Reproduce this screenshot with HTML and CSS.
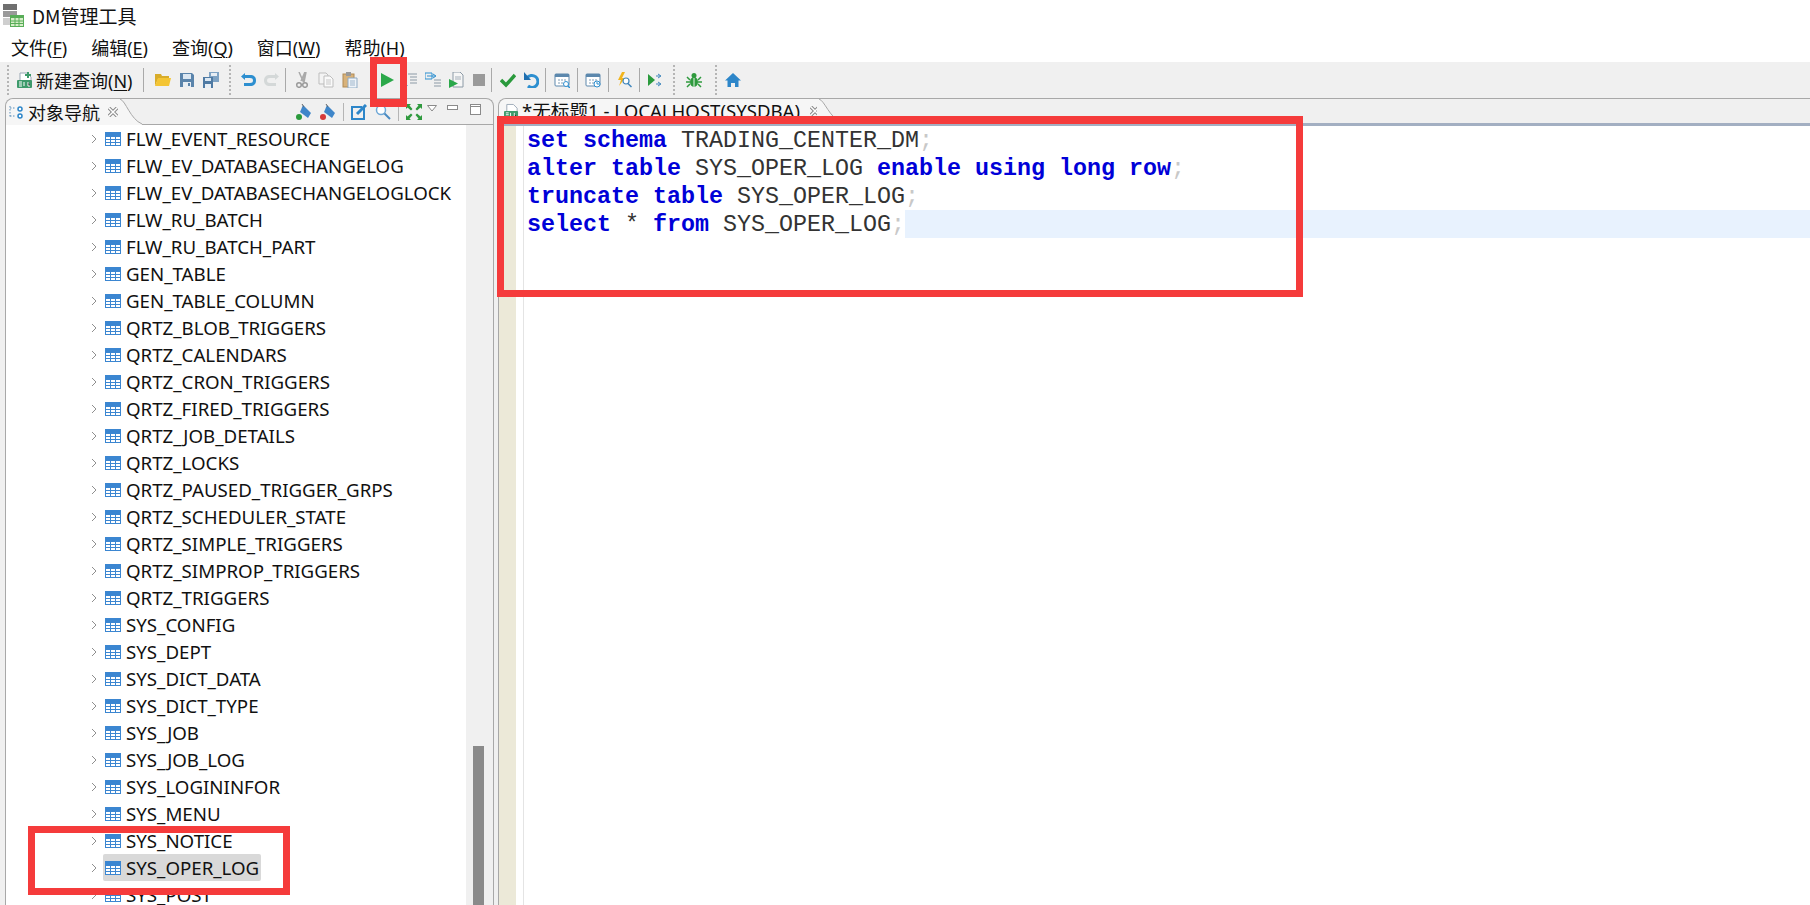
FILE: index.html
```html
<!DOCTYPE html>
<html lang="zh">
<head>
<meta charset="utf-8">
<title>DM管理工具</title>
<link rel="stylesheet" href="styles.css">
</head>
<body>
<svg class="defs" width="0" height="0" aria-hidden="true">
  <symbol id="tbl" viewBox="0 0 16 14">
    <rect width="16" height="14" fill="#3b86d1"/>
    <path d="M1 5h14v8H1z" fill="#fff"/>
    <path d="M1 7.500h14M1 10.500h14M5.500 5v8M10.500 5v8" stroke="#3b86d1" stroke-width="1"/>
  </symbol>
  <symbol id="x" viewBox="0 0 10 10">
    <path d="M1 1l8 8M9 1l-8 8" stroke="#8a8a8a" stroke-width="3.500"/>
    <path d="M1 1l8 8M9 1l-8 8" stroke="#fff" stroke-width="1.500"/>
  </symbol>
  <symbol id="sql" viewBox="0 0 16 16">
    <path d="M3 1h7l4 4v6H3z" fill="#fff" stroke="#9aa8b5"/>
    <rect y="8" width="15" height="8" rx="1" fill="#3d9a6b"/>
    <path d="M2 10h3M2 12h3M2 14h3M7 10v4M11 10v4h2" stroke="#fff" stroke-width="1"/>
  </symbol>
</svg>

<header class="titlebar">
  <svg class="app-icon" width="21" height="24" viewBox="0 0 21 24"><rect x="0" y="0" width="14" height="6" fill="#6f6f6f"/><rect x="0" y="7" width="14" height="6" fill="#9a9a9a"/><rect x="0" y="14" width="14" height="7" fill="#cfcfcf"/><rect x="7" y="11" width="14" height="12" fill="#58ad58"/><path d="M8 14h12v8H8z" fill="#d6edc8"/><path d="M8 17h12M8 19.500h12M12 14v8M16 14v8" stroke="#58ad58"/></svg>
  <span class="app-name">DM管理工具</span>
</header>

<nav class="menubar">
  <span class="menu-item">文件(<u>F</u>)</span>
  <span class="menu-item">编辑(<u>E</u>)</span>
  <span class="menu-item">查询(<u>Q</u>)</span>
  <span class="menu-item">窗口(<u>W</u>)</span>
  <span class="menu-item">帮助(<u>H</u>)</span>
</nav>

<div class="toolbar">
  <i class="grip"></i>
  <span class="newq">
    <svg width="16" height="16" viewBox="0 0 16 16"><use href="#sql"/><path d="M11 0v6M8 3h6" stroke="#3d9a6b" stroke-width="2"/></svg>
    <span>新建查询(<u>N</u>)</span>
  </span>
  <i class="sep s1"></i>
  <svg class="ico" viewBox="0 0 16 16"><path d="M0 2h6l1 2h7v3H3l-3 7z" fill="#d8ac2a"/><path d="M3 6h13l-2 8H0z" fill="#f4c534"/></svg>
  <svg class="ico" viewBox="0 0 16 16"><path d="M1 1h12l2 2v12H1z" fill="#5a84ab"/><rect x="4" y="2" width="8" height="5" fill="#dbe7f2"/><rect x="4" y="10" width="8" height="5" fill="#e8eef4"/><rect x="9" y="11" width="2" height="3" fill="#5a84ab"/></svg>
  <svg class="ico" viewBox="0 0 16 16"><path d="M6 0h10v10H6z" fill="#7fa3c4"/><rect x="8" y="1" width="6" height="3" fill="#e8eef4"/><path d="M0 5h10v11H0z" fill="#4f7aa3"/><rect x="2" y="6" width="6" height="3" fill="#dbe7f2"/><rect x="2" y="12" width="6" height="4" fill="#e8eef4"/></svg>
  <i class="grip g2"></i>
  <span class="group">
    <svg class="ico" viewBox="0 0 16 16"><path d="M5 1L1 4.500 5 8V6h5c2 0 3 .8 3 2.500S12 11 10 11H4v3h6c4 0 6-2 6-5.500S14 3 10 3H5z" fill="#2d8fd0"/></svg>
    <svg class="ico" viewBox="0 0 16 16"><path d="M11 1l4 3.500L11 8V6H6C4 6 3 6.800 3 8.500S4 11 6 11h6v3H6c-4 0-6-2-6-5.500S2 3 6 3h5z" fill="#d4d8d8"/></svg>
  </span>
  <i class="sep s3"></i>
  <span class="group">
    <svg class="ico" viewBox="0 0 16 16"><path d="M5 0l4 9 3-9-2 10M11 0L7 9" stroke="#a9a9a9" stroke-width="1.500" fill="none"/><circle cx="5" cy="13" r="2.300" fill="none" stroke="#9a9a9a" stroke-width="1.500"/><circle cx="11" cy="13" r="2.300" fill="none" stroke="#9a9a9a" stroke-width="1.500"/></svg>
    <svg class="ico" viewBox="0 0 16 16"><path d="M1 1h7l2 2v9H1z" fill="#f4f4f4" stroke="#bdbdbd"/><path d="M6 4h6l3 3v8H6z" fill="#fafafa" stroke="#bdbdbd"/><path d="M8 8h5M8 10h5M8 12h5" stroke="#c8c8c8"/></svg>
    <svg class="ico" viewBox="0 0 16 16"><rect x="1" y="2" width="11" height="13" fill="#d8b27a" stroke="#b08a55"/><rect x="4" y="0" width="5" height="4" fill="#9a9a9a"/><path d="M6 6h9v10H6z" fill="#eef3f8" stroke="#8faac4"/><path d="M8 9h5M8 11h5M8 13h5" stroke="#9fb6cc"/></svg>
  </span>
  <i class="sep s4"></i>
  <span class="group g23">
    <svg class="ico" viewBox="0 0 16 16"><path d="M2 1l13 7-13 7z" fill="#2ba84a"/></svg>
    <svg class="ico" viewBox="0 0 16 16"><path d="M6 2h9M8 5h7M8 8h7M8 11h7" stroke="#8c9aa6"/><path d="M3 1v5M3 10v5" stroke="#2d8fd0" stroke-width="1.500"/><path d="M0 13l3 3 3-3" fill="#2d8fd0"/></svg>
    <svg class="ico" viewBox="0 0 16 16"><path d="M9 8h7M9 11h7M9 14h7" stroke="#8c9aa6"/><path d="M0 1h7v6H0z" fill="none" stroke="#2d8fd0"/><path d="M2 4h8M8 2l3 2-3 2" stroke="#2d8fd0" fill="none"/></svg>
    <svg class="ico" viewBox="0 0 16 16"><path d="M5 0h7l3 3v12H5z" fill="#f6f6f6" stroke="#8c9aa6"/><path d="M7 5h6M7 7h6" stroke="#a5b0ba"/><path d="M1 7l9 4.500L1 16z" fill="#2ba84a"/></svg>
    <svg class="ico" viewBox="0 0 16 16"><rect x="2" y="2" width="12" height="12" fill="#9a9a9a"/></svg>
  </span>
  <i class="sep s5"></i>
  <span class="group g23">
    <svg class="ico" viewBox="0 0 16 16"><path d="M1 8l5 5 9-10" stroke="#2a9a3c" stroke-width="3.500" fill="none"/></svg>
    <svg class="ico" viewBox="0 0 16 16"><path d="M4 6a6 6 0 1 1 1 8" stroke="#2d8fd0" stroke-width="3" fill="none"/><path d="M1 0v8h7z" fill="#1f6fb0"/></svg>
  </span>
  <i class="sep s6"></i>
  <svg class="ico" viewBox="0 0 16 16"><rect x="1" y="2" width="14" height="12" rx="1" fill="#fff" stroke="#5c88ad"/><path d="M1 2h14v3H1z" fill="#5c88ad"/><path d="M4 8h2M7 8h2M10 8h2M4 11h2M7 11h2" stroke="#7f9cb5"/><circle cx="12" cy="12" r="2.500" fill="#fff" stroke="#2d8fd0"/><path d="M14 14l2 2" stroke="#2d8fd0" stroke-width="1.500"/></svg>
  <i class="sep s7"></i>
  <svg class="ico" viewBox="0 0 16 16"><rect x="1" y="2" width="14" height="12" rx="1" fill="#fff" stroke="#5c88ad"/><path d="M1 2h14v3H1z" fill="#5c88ad"/><path d="M4 8h2M7 8h2M10 8h2M4 11h2M7 11h2" stroke="#7f9cb5"/><circle cx="12" cy="12" r="3" fill="#fff" stroke="#2d8fd0"/><path d="M12 10v2h2" stroke="#2d8fd0" fill="none"/></svg>
  <i class="sep s7"></i>
  <svg class="ico" viewBox="0 0 16 16"><path d="M6 0l-4 8h3l-2 6 6-8H6l3-6z" fill="#f2b51d"/><circle cx="10" cy="9" r="3" fill="#fff" stroke="#3f86bd" stroke-width="1.200"/><path d="M12 11.500l3.500 3.500" stroke="#3f86bd" stroke-width="1.500"/></svg>
  <i class="sep s7"></i>
  <svg class="ico" viewBox="0 0 16 16"><path d="M1 2l7 6-7 6z" fill="#2a9a3c"/><path d="M9 4h4M11 2l3 2-3 2M9 12h4M11 10l3 2-3 2" stroke="#3f86bd" fill="none"/></svg>
  <i class="grip g3"></i>
  <svg class="ico" viewBox="0 0 16 16"><ellipse cx="8" cy="10" rx="4" ry="5" fill="#2f9a3e"/><circle cx="8" cy="3.500" r="2.500" fill="#2f9a3e"/><path d="M1 5l3 3M15 5l-3 3M0 10h4M16 10h-4M1 15l3-3M15 15l-3-3" stroke="#2f9a3e" stroke-width="1.500"/><path d="M8 6v9" stroke="#e6f3e6"/></svg>
  <i class="grip g4"></i>
  <svg class="ico" viewBox="0 0 16 16"><path d="M8 1L0 8.500h2.500V15H6v-4h4v4h3.500V8.500H16z" fill="#2d86c9"/></svg>
</div>

<main class="workspace">
  <section class="pane nav-pane">
    <div class="pane-head">
      <div class="tab tab-nav">
        <svg width="14" height="15" viewBox="0 0 14 15"><path d="M1 1v11M1 3h6M1 11h6" stroke="#5a8fbb" stroke-dasharray="1.500 1.500" fill="none"/><circle cx="11" cy="4" r="2" fill="#fff" stroke="#2d86c9" stroke-width="1.500"/><circle cx="11" cy="11" r="2" fill="#fff" stroke="#2d86c9" stroke-width="1.500"/></svg>
        <span class="tab-text">对象导航</span>
        <svg class="tab-x" viewBox="0 0 10 10"><use href="#x"/></svg>
      </div>
      <svg class="tab-curve" width="24" height="26" viewBox="0 0 24 26"><path d="M0 0h2c6 2 10 20 22 25v1H0z" fill="#f6f6f6"/><path d="M2 0c6 2 10 20 22 25" fill="none" stroke="#a8a8a8"/></svg>
      <div class="head-tools">
        <svg class="ico" viewBox="0 0 16 16"><path d="M7 1l8 8-3 5-8-6z" fill="#3f86c9"/><circle cx="3" cy="13" r="3" fill="#2a9a3c"/><path d="M6 0l2 3" stroke="#666"/></svg>
        <svg class="ico" viewBox="0 0 16 16"><path d="M7 1l8 8-3 5-8-6z" fill="#3f86c9"/><circle cx="3" cy="13" r="3" fill="#d63a3a"/><path d="M6 0l2 3" stroke="#666"/></svg>
        <i class="vline"></i>
        <svg class="ico" viewBox="0 0 16 16"><path d="M13 4v11H1V3h10" fill="none" stroke="#2d86c9" stroke-width="2"/><path d="M6 10l9-9" stroke="#2d86c9" stroke-width="3"/></svg>
        <svg class="ico" viewBox="0 0 16 16"><circle cx="6" cy="6" r="4.500" fill="#fff" stroke="#6fa8d6" stroke-width="1.500"/><path d="M9.500 9.500L15 15" stroke="#4a8bc2" stroke-width="2"/></svg>
        <i class="vline"></i>
        <svg class="ico" viewBox="0 0 16 16"><path d="M0 0h5l-1.500 1.500L6.500 5 5 6.500 1.500 3.500 0 5zM16 0v5l-1.500-1.500L11 6.500 9.500 5l3-3.500L11 0zM0 16v-5l1.500 1.500L5 9.500 6.500 11l-3 3.500L5 16zM16 16h-5l1.500-1.500L9.500 11 11 9.500l3.500 3L16 11z" fill="#2f9a3e"/></svg>
        <svg class="mini tri" width="10" height="7" viewBox="0 0 10 7"><path d="M.5.500h9L5 6z" fill="#fff" stroke="#8a8a8a"/></svg>
        <svg class="mini minb" width="11" height="5" viewBox="0 0 11 5"><rect x=".5" y=".5" width="10" height="4" fill="#fff" stroke="#8a8a8a"/></svg>
        <svg class="mini maxb" width="11" height="11" viewBox="0 0 11 11"><rect x=".5" y=".5" width="10" height="10" fill="#fff" stroke="#8a8a8a"/><path d="M0 2.500h11" stroke="#8a8a8a"/></svg>
      </div>
    </div>
    <div class="tree-wrap">
      <ul class="tree">
        <li class="row"><svg class="arrow" viewBox="0 0 6 10"><path d="M1 1l4 4-4 4"/></svg><span class="node"><svg class="tbl"><use href="#tbl"/></svg>FLW_EVENT_RESOURCE</span></li>
        <li class="row"><svg class="arrow" viewBox="0 0 6 10"><path d="M1 1l4 4-4 4"/></svg><span class="node"><svg class="tbl"><use href="#tbl"/></svg>FLW_EV_DATABASECHANGELOG</span></li>
        <li class="row"><svg class="arrow" viewBox="0 0 6 10"><path d="M1 1l4 4-4 4"/></svg><span class="node"><svg class="tbl"><use href="#tbl"/></svg>FLW_EV_DATABASECHANGELOGLOCK</span></li>
        <li class="row"><svg class="arrow" viewBox="0 0 6 10"><path d="M1 1l4 4-4 4"/></svg><span class="node"><svg class="tbl"><use href="#tbl"/></svg>FLW_RU_BATCH</span></li>
        <li class="row"><svg class="arrow" viewBox="0 0 6 10"><path d="M1 1l4 4-4 4"/></svg><span class="node"><svg class="tbl"><use href="#tbl"/></svg>FLW_RU_BATCH_PART</span></li>
        <li class="row"><svg class="arrow" viewBox="0 0 6 10"><path d="M1 1l4 4-4 4"/></svg><span class="node"><svg class="tbl"><use href="#tbl"/></svg>GEN_TABLE</span></li>
        <li class="row"><svg class="arrow" viewBox="0 0 6 10"><path d="M1 1l4 4-4 4"/></svg><span class="node"><svg class="tbl"><use href="#tbl"/></svg>GEN_TABLE_COLUMN</span></li>
        <li class="row"><svg class="arrow" viewBox="0 0 6 10"><path d="M1 1l4 4-4 4"/></svg><span class="node"><svg class="tbl"><use href="#tbl"/></svg>QRTZ_BLOB_TRIGGERS</span></li>
        <li class="row"><svg class="arrow" viewBox="0 0 6 10"><path d="M1 1l4 4-4 4"/></svg><span class="node"><svg class="tbl"><use href="#tbl"/></svg>QRTZ_CALENDARS</span></li>
        <li class="row"><svg class="arrow" viewBox="0 0 6 10"><path d="M1 1l4 4-4 4"/></svg><span class="node"><svg class="tbl"><use href="#tbl"/></svg>QRTZ_CRON_TRIGGERS</span></li>
        <li class="row"><svg class="arrow" viewBox="0 0 6 10"><path d="M1 1l4 4-4 4"/></svg><span class="node"><svg class="tbl"><use href="#tbl"/></svg>QRTZ_FIRED_TRIGGERS</span></li>
        <li class="row"><svg class="arrow" viewBox="0 0 6 10"><path d="M1 1l4 4-4 4"/></svg><span class="node"><svg class="tbl"><use href="#tbl"/></svg>QRTZ_JOB_DETAILS</span></li>
        <li class="row"><svg class="arrow" viewBox="0 0 6 10"><path d="M1 1l4 4-4 4"/></svg><span class="node"><svg class="tbl"><use href="#tbl"/></svg>QRTZ_LOCKS</span></li>
        <li class="row"><svg class="arrow" viewBox="0 0 6 10"><path d="M1 1l4 4-4 4"/></svg><span class="node"><svg class="tbl"><use href="#tbl"/></svg>QRTZ_PAUSED_TRIGGER_GRPS</span></li>
        <li class="row"><svg class="arrow" viewBox="0 0 6 10"><path d="M1 1l4 4-4 4"/></svg><span class="node"><svg class="tbl"><use href="#tbl"/></svg>QRTZ_SCHEDULER_STATE</span></li>
        <li class="row"><svg class="arrow" viewBox="0 0 6 10"><path d="M1 1l4 4-4 4"/></svg><span class="node"><svg class="tbl"><use href="#tbl"/></svg>QRTZ_SIMPLE_TRIGGERS</span></li>
        <li class="row"><svg class="arrow" viewBox="0 0 6 10"><path d="M1 1l4 4-4 4"/></svg><span class="node"><svg class="tbl"><use href="#tbl"/></svg>QRTZ_SIMPROP_TRIGGERS</span></li>
        <li class="row"><svg class="arrow" viewBox="0 0 6 10"><path d="M1 1l4 4-4 4"/></svg><span class="node"><svg class="tbl"><use href="#tbl"/></svg>QRTZ_TRIGGERS</span></li>
        <li class="row"><svg class="arrow" viewBox="0 0 6 10"><path d="M1 1l4 4-4 4"/></svg><span class="node"><svg class="tbl"><use href="#tbl"/></svg>SYS_CONFIG</span></li>
        <li class="row"><svg class="arrow" viewBox="0 0 6 10"><path d="M1 1l4 4-4 4"/></svg><span class="node"><svg class="tbl"><use href="#tbl"/></svg>SYS_DEPT</span></li>
        <li class="row"><svg class="arrow" viewBox="0 0 6 10"><path d="M1 1l4 4-4 4"/></svg><span class="node"><svg class="tbl"><use href="#tbl"/></svg>SYS_DICT_DATA</span></li>
        <li class="row"><svg class="arrow" viewBox="0 0 6 10"><path d="M1 1l4 4-4 4"/></svg><span class="node"><svg class="tbl"><use href="#tbl"/></svg>SYS_DICT_TYPE</span></li>
        <li class="row"><svg class="arrow" viewBox="0 0 6 10"><path d="M1 1l4 4-4 4"/></svg><span class="node"><svg class="tbl"><use href="#tbl"/></svg>SYS_JOB</span></li>
        <li class="row"><svg class="arrow" viewBox="0 0 6 10"><path d="M1 1l4 4-4 4"/></svg><span class="node"><svg class="tbl"><use href="#tbl"/></svg>SYS_JOB_LOG</span></li>
        <li class="row"><svg class="arrow" viewBox="0 0 6 10"><path d="M1 1l4 4-4 4"/></svg><span class="node"><svg class="tbl"><use href="#tbl"/></svg>SYS_LOGININFOR</span></li>
        <li class="row"><svg class="arrow" viewBox="0 0 6 10"><path d="M1 1l4 4-4 4"/></svg><span class="node"><svg class="tbl"><use href="#tbl"/></svg>SYS_MENU</span></li>
        <li class="row"><svg class="arrow" viewBox="0 0 6 10"><path d="M1 1l4 4-4 4"/></svg><span class="node"><svg class="tbl"><use href="#tbl"/></svg>SYS_NOTICE</span></li>
        <li class="row"><svg class="arrow" viewBox="0 0 6 10"><path d="M1 1l4 4-4 4"/></svg><span class="node selected"><svg class="tbl"><use href="#tbl"/></svg>SYS_OPER_LOG</span></li>
        <li class="row"><svg class="arrow" viewBox="0 0 6 10"><path d="M1 1l4 4-4 4"/></svg><span class="node"><svg class="tbl"><use href="#tbl"/></svg>SYS_POST</span></li>
      </ul>
      <div class="scrollbar"><div class="thumb"></div></div>
    </div>
  </section>

  <section class="pane editor-pane">
    <div class="pane-head editor-head">
      <div class="tab tab-editor">
        <svg width="15" height="16" viewBox="0 0 16 16"><use href="#sql"/></svg>
        <span class="tab-text">*无标题1 - LOCALHOST(SYSDBA)</span>
        <svg class="tab-x" viewBox="0 0 10 10"><use href="#x"/></svg>
      </div>
      <svg class="tab-curve" width="24" height="24" viewBox="0 0 24 24"><path d="M0 0h2c6 2 10 18 22 23v1H0z" fill="#f6f6f6"/><path d="M2 0c6 2 10 18 22 23" fill="none" stroke="#a8a8a8"/></svg>
    </div>
    <div class="editor">
      <div class="gutter"></div>
      <div class="ruler"></div>
      <div class="code">
        <div class="line"><b>set schema</b> TRADING_CENTER_DM<em>;</em></div>
        <div class="line"><b>alter table</b> SYS_OPER_LOG <b>enable using long row</b><em>;</em></div>
        <div class="line"><b>truncate table</b> SYS_OPER_LOG<em>;</em></div>
        <div class="line current"><span><b>select</b> * <b>from</b> SYS_OPER_LOG<em>;</em></span><span class="hl"></span></div>
      </div>
    </div>
  </section>
</main>

<div class="mark mark-run"></div>
<div class="mark mark-code"></div>
<div class="mark mark-tree"></div>
</body>
</html>
```

FILE: styles.css
```css
* { box-sizing: border-box; }
html, body { margin: 0; height: 100%; }
body {
  width: 1810px;
  height: 905px;
  overflow: hidden;
  position: relative;
  display: flex;
  flex-direction: column;
  background: #fff;
  color: #111;
  font-family: "Noto Sans", "Noto Sans CJK SC", sans-serif;
  font-size: 18px;
}
.defs { position: absolute; }
svg { display: block; flex: none; }
i { display: block; flex: none; }
u { text-decoration-thickness: 1px; text-underline-offset: 2px; }

.titlebar { height: 34px; display: flex; align-items: center; gap: 8px; padding: 0 0 3px 3px; flex: none; }
.app-name { font-size: 19px; line-height: 24px; font-family: "Noto Sans CJK SC", sans-serif; }

.menubar { height: 28px; display: flex; gap: 24px; padding: 0 0 2px 11px; align-items: center; font-size: 18px; flex: none; }

.toolbar {
  height: 36px;
  flex: none;
  background: #f0f0f0;
  display: flex;
  align-items: center;
  gap: 8px;
  padding-left: 7px;
}
.grip { width: 2px; height: 30px; background: repeating-linear-gradient(#b5b5b5 0 2px, transparent 2px 4px); }
.g2 { margin: 0 1px 0 2px; }
.g3 { margin: 0 3px 0 2px; }
.g4 { margin: 0 0 0 5px; }
.sep { width: 1px; height: 24px; background: #a9a9a9; margin: 0 2px; }
.s1 { margin: 0 3px 0 2px; }
.s3 { margin: 0 0 0 -3px; }
.s4 { margin: 0 0 0 4px; }
.s5 { margin: 0 0 0 -4px; }
.s6 { margin: 0 0 0 -2px; }
.s7 { margin: 0 -1px; }
.newq { display: flex; align-items: center; gap: 3px; font-size: 18px; white-space: nowrap; }
.ico { width: 16px; height: 16px; }
.group { display: flex; align-items: center; gap: 8px; }
.g23 { gap: 7px; }

.workspace { flex: 1; min-height: 0; display: flex; padding-left: 5px; background: #f0f0f0; }
.pane { display: flex; flex-direction: column; min-height: 0; border: 1px solid #a8a8a8; border-bottom: 0; border-radius: 8px 8px 0 0; background: #f0f0f0; }
.nav-pane { width: 489px; }
.editor-pane { flex: 1; margin-left: 4px; border-right: 0; border-radius: 8px 0 0 0; min-width: 0; }

.pane-head { height: 26px; display: flex; align-items: stretch; flex: none; position: relative; border-bottom: 1px solid #a8a8a8; }
.editor-head { height: 24px; border-bottom: 0; }
.tab { display: flex; align-items: center; background: #f6f6f6; white-space: nowrap; height: 26px; border-radius: 8px 0 0 0; }
.tab-nav { width: 112px; padding-left: 3px; gap: 5px; }
.tab-editor { width: 318px; height: 24px; padding-left: 5px; gap: 3px; }
.tab-text { font-family: "Noto Sans CJK SC", sans-serif; font-size: 18px; line-height: 24px; }
.tab-editor .tab-text { font-family: "Noto Sans", "Noto Sans CJK SC", sans-serif; font-size: 18.600px; }
.tab-x { width: 10px; height: 10px; margin-left: 3px; }
.tab-editor .tab-x { margin-left: 7px; }
.head-tools { flex: 1; display: flex; align-items: center; gap: 8px; padding: 0 0 0 154px; }
.vline { width: 1px; height: 18px; background: #b5b5b5; margin: 0 -1px; }
.tri { margin: -6px 0 0 -3px; }
.minb { margin: -8px 0 0 2px; }
.maxb { margin: -5px 0 0 4px; }

.tree-wrap { flex: 1; min-height: 0; display: flex; background: #fff; overflow: hidden; }
.tree { flex: 1; list-style: none; margin: 0; padding: 0; }
.row { height: 27px; display: flex; align-items: center; padding-left: 85px; white-space: nowrap; }
.arrow { width: 6px; height: 10px; margin-right: 6px; }
.arrow path { fill: none; stroke: #8f8f8f; stroke-width: 1; }
.node { height: 27px; display: flex; align-items: center; gap: 5px; padding: 0 2px; font-size: 18.700px; }
.tbl { width: 16px; height: 14px; }
.selected { background: #d9d9d9; border-radius: 2px; }
.scrollbar { width: 27px; background: #f0f0f0; padding: 621px 9px 0 7px; }
.thumb { height: 200px; background: #8a8a8a; }

.editor { flex: 1; min-height: 0; display: flex; background: #fff; border-top: 3px solid #a3afc2; }
.gutter { width: 17px; background: #ece9d8; }
.ruler { width: 8px; border-right: 1px solid #e4e4e4; }
.code { flex: 1; min-width: 0; padding: 0 0 0 3px; font-family: "Liberation Mono", monospace; font-size: 23.330px; line-height: 30px; color: #333; }
.line { height: 28px; display: flex; white-space: pre; }
.line b { color: #0000d8; font-weight: 700; }
.line em { color: #c8c8c8; font-style: normal; }
.hl { flex: 1; background: #e8f2fe; }

.mark { position: absolute; border: 7px solid #f53b3b; }
.mark-run { left: 370px; top: 57px; width: 37px; height: 50px; border-bottom-width: 8px; }
.mark-code { left: 497px; top: 116px; width: 806px; height: 181px; border-top-width: 8px; }
.mark-tree { left: 28px; top: 826px; width: 262px; height: 69px; }
```
